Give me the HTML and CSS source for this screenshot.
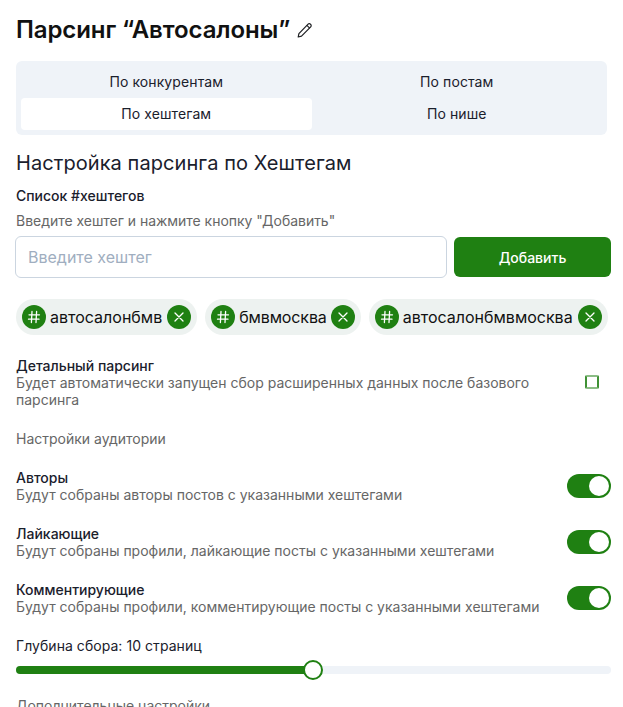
FILE: index.html
```html
<!DOCTYPE html>
<html lang="ru">
<head>
    <meta charset="UTF-8">
    <meta name="viewport" content="width=device-width, initial-scale=1.0">
    <title>Парсинг</title>
    <link rel="stylesheet" href="styles.css">
</head>
<body>
    <div class="container">
        <div class="title-row">
            <h1>Парсинг “Автосалоны”</h1>
            <svg class="edit-icon" width="16" height="16" viewBox="0 0 16 16" fill="none" stroke="#1c1e21" stroke-width="1.2" stroke-linejoin="round">
                <path d="M1.2 15l.7-3.4 9.2-9.4a1.6 1.6 0 0 1 2.3 0l.3.3a1.6 1.6 0 0 1 0 2.3l-9.2 9.4z"/>
                <path d="M9.9 3.4l2.8 2.8"/>
            </svg>
        </div>

        <div class="tabs">
            <div class="tab">По конкурентам</div>
            <div class="tab">По постам</div>
            <div class="tab active">По хештегам</div>
            <div class="tab">По нише</div>
        </div>

        <h2>Настройка парсинга по Хештегам</h2>
        <div class="label">Список #хештегов</div>
        <div class="hint">Введите хештег и нажмите кнопку "Добавить"</div>

        <div class="add-row">
            <input type="text" class="input-field" placeholder="Введите хештег">
            <button class="add-btn">Добавить</button>
        </div>

        <div class="chips">
            <div class="chip">
                <span class="chip-icon"><svg width="14" height="14" viewBox="0 0 14 14" fill="none" stroke="#fff" stroke-width="1.3" stroke-linecap="round"><path d="M5 1.5L4.4 12.5M9.6 1.5L9 12.5M2 4.8h10.5M1.5 9.2H12"/></svg></span>
                <span class="chip-text">автосалонбмв</span>
                <span class="chip-icon"><svg width="12" height="12" viewBox="0 0 12 12" fill="none" stroke="#fff" stroke-width="1.3" stroke-linecap="round"><path d="M2 2l8 8M10 2l-8 8"/></svg></span>
            </div>
            <div class="chip">
                <span class="chip-icon"><svg width="14" height="14" viewBox="0 0 14 14" fill="none" stroke="#fff" stroke-width="1.3" stroke-linecap="round"><path d="M5 1.5L4.4 12.5M9.6 1.5L9 12.5M2 4.8h10.5M1.5 9.2H12"/></svg></span>
                <span class="chip-text tight">бмвмосква</span>
                <span class="chip-icon"><svg width="12" height="12" viewBox="0 0 12 12" fill="none" stroke="#fff" stroke-width="1.3" stroke-linecap="round"><path d="M2 2l8 8M10 2l-8 8"/></svg></span>
            </div>
            <div class="chip">
                <span class="chip-icon"><svg width="14" height="14" viewBox="0 0 14 14" fill="none" stroke="#fff" stroke-width="1.3" stroke-linecap="round"><path d="M5 1.5L4.4 12.5M9.6 1.5L9 12.5M2 4.8h10.5M1.5 9.2H12"/></svg></span>
                <span class="chip-text">автосалонбмвмосква</span>
                <span class="chip-icon"><svg width="12" height="12" viewBox="0 0 12 12" fill="none" stroke="#fff" stroke-width="1.3" stroke-linecap="round"><path d="M2 2l8 8M10 2l-8 8"/></svg></span>
            </div>
        </div>

        <div class="option">
            <div class="option-text">
                <div class="option-name">Детальный парсинг</div>
                <div class="option-desc">Будет автоматически запущен сбор расширенных данных после базового парсинга</div>
            </div>
            <div class="checkbox"></div>
        </div>

        <div class="section-title">Настройки аудитории</div>

        <div class="option">
            <div class="option-text">
                <div class="option-name">Авторы</div>
                <div class="option-desc">Будут собраны авторы постов с указанными хештегами</div>
            </div>
            <div class="switch"><span class="knob"></span></div>
        </div>
        <div class="option">
            <div class="option-text">
                <div class="option-name">Лайкающие</div>
                <div class="option-desc">Будут собраны профили, лайкающие посты с указанными хештегами</div>
            </div>
            <div class="switch"><span class="knob"></span></div>
        </div>
        <div class="option">
            <div class="option-text">
                <div class="option-name">Комментирующие</div>
                <div class="option-desc">Будут собраны профили, комментирующие посты с указанными хештегами</div>
            </div>
            <div class="switch"><span class="knob"></span></div>
        </div>

        <div class="depth-label">Глубина сбора: 10 страниц</div>
        <div class="slider">
            <div class="slider-fill"></div>
            <div class="slider-thumb"></div>
        </div>

        <div class="section-title extra">Дополнительные настройки</div>
    </div>
</body>
</html>
```

FILE: styles.css
```css
* {
    margin: 0;
    padding: 0;
    box-sizing: border-box;
    font-family: Inter, "Noto Sans", sans-serif;
}

html, body {
    height: 100%;
    overflow: hidden;
    background-color: white;
}

.container {
    width: 623px;
    padding: 15px 12px 0 16px;
    color: #1a202c;
}

.title-row {
    display: flex;
    align-items: center;
    gap: 7px;
    height: 30px;
    margin-bottom: 16px;
}

h1 {
    font-size: 24px;
    line-height: 30px;
    font-weight: 600;
    letter-spacing: -0.1px;
    color: #111;
}

.tabs {
    display: grid;
    grid-template-columns: 1fr 1fr;
    width: 591px;
    padding: 5px;
    background-color: #eff3f8;
    border-radius: 6px;
    margin-bottom: 16px;
}

.tab {
    height: 32px;
    line-height: 32px;
    text-align: center;
    font-size: 14px;
    font-weight: 400;
    letter-spacing: 0.1px;
    color: #1a202c;
}

.tab.active {
    background-color: white;
    border-radius: 4px;
}

h2 {
    font-size: 20px;
    line-height: 24px;
    font-weight: 400;
    letter-spacing: 0.07px;
    color: #1a202c;
    margin-bottom: 12px;
}

.label {
    font-size: 14px;
    line-height: 18px;
    font-weight: 500;
    margin-bottom: 7px;
}

.hint {
    font-size: 14px;
    line-height: 18px;
    letter-spacing: -0.03px;
    color: #666;
    margin-bottom: 6px;
}

.add-row {
    display: flex;
    align-items: center;
    gap: 7px;
    margin-left: -1px;
    margin-bottom: 21px;
}

.input-field {
    width: 432px;
    height: 42px;
    padding: 0 12px;
    border: 1px solid #cbd5e0;
    border-radius: 6px;
    font-size: 16px;
    outline: none;
}

.input-field::placeholder {
    color: #a0aec0;
}

.add-btn {
    width: 157px;
    height: 40px;
    background-color: #1f8012;
    color: white;
    border: none;
    border-radius: 6px;
    font-size: 14px;
    font-weight: 500;
}

.chips {
    display: flex;
    gap: 8px;
    margin-bottom: 22px;
}

.chip {
    display: flex;
    align-items: center;
    gap: 4px;
    height: 36px;
    padding: 0 6px;
    background-color: #edf2f0;
    border-radius: 18px;
    font-size: 16px;
    color: #111;
}

.chip-text {
    margin-right: 1px;
}

.chip-text.tight {
    margin-right: 0;
    letter-spacing: -0.12px;
}

.chip-icon {
    display: flex;
    align-items: center;
    justify-content: center;
    width: 24px;
    height: 24px;
    border-radius: 50%;
    background-color: #1f8012;
}

.option {
    display: flex;
    align-items: center;
    justify-content: space-between;
    margin-bottom: 22px;
}

.option-text {
    width: 540px;
}

.option-name {
    font-size: 14px;
    line-height: 17px;
    font-weight: 500;
}

.option-desc {
    font-size: 14px;
    line-height: 17px;
    color: #666;
}

.checkbox {
    width: 14px;
    height: 14px;
    margin-right: 12px;
    margin-bottom: 2px;
    border: 2px solid #8cbd86;
    border-left-color: #3f9135;
    border-right-color: #3f9135;
    border-radius: 2px;
}

.section-title {
    font-size: 14px;
    line-height: 17px;
    color: #666;
    margin-bottom: 22px;
}

.switch {
    display: flex;
    justify-content: flex-end;
    align-items: center;
    width: 44px;
    height: 24px;
    padding: 2px;
    background-color: #1f8012;
    border-radius: 12px;
}

.knob {
    width: 20px;
    height: 20px;
    border-radius: 50%;
    background-color: white;
}

.depth-label {
    font-size: 14px;
    line-height: 18px;
    letter-spacing: 0.05px;
    margin-bottom: 11px;
}

.slider {
    position: relative;
    width: 595px;
    height: 8px;
    background-color: #eff3f8;
    border-radius: 4px;
    margin-bottom: 23px;
}

.slider-fill {
    width: 297px;
    height: 8px;
    background-color: #1f8012;
    border-radius: 4px;
}

.slider-thumb {
    position: absolute;
    left: 287px;
    top: -6px;
    width: 20px;
    height: 20px;
    border: 2px solid #1f8012;
    border-radius: 50%;
    background-color: white;
}

.extra {
    margin-bottom: 0;
}
```
